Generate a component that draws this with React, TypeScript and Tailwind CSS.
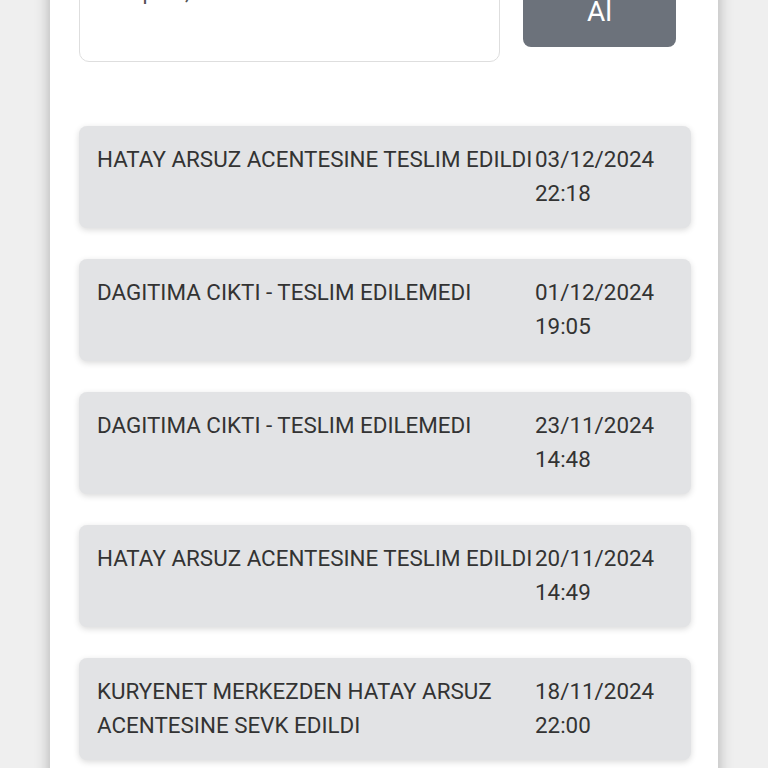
import React from "react";

const rows = [
  { text: "HATAY ARSUZ ACENTESINE TESLIM EDILDI", date: "03/12/2024", time: "22:18" },
  { text: "DAGITIMA CIKTI - TESLIM EDILEMEDI", date: "01/12/2024", time: "19:05" },
  { text: "DAGITIMA CIKTI - TESLIM EDILEMEDI", date: "23/11/2024", time: "14:48" },
  { text: "HATAY ARSUZ ACENTESINE TESLIM EDILDI", date: "20/11/2024", time: "14:49" },
  { text: "KURYENET MERKEZDEN HATAY ARSUZ ACENTESINE SEVK EDILDI", date: "18/11/2024", time: "22:00" },
];

export default function App() {
  return (
    <div className="h-[768px] overflow-hidden bg-[#efefef]" style={{ fontFamily: "Roboto, 'Noto Sans', sans-serif" }}>
      <div className="ml-[50px] w-[668px] min-h-[900px] bg-white shadow-[0_0_14px_rgba(0,0,0,0.28)] -mt-[40px] px-[29px]">
        <div className="flex items-start gap-[23px]">
          <div className="w-[421px] h-[102px] rounded-[10px] border border-[#dedede] bg-white px-[22px] pt-[17px] text-[22px] leading-[28px] text-[#555555]">
            <span>Takip no, 1234 5678</span>
          </div>
          <button className="mt-[17px] w-[153px] h-[70px] rounded-[8px] bg-[#6c727b] text-white text-[28px] leading-none">
            Al
          </button>
        </div>
        <div className="mt-[64px] flex flex-col gap-[31px] w-[612px]">
          {rows.map((r, i) => (
            <div
              key={i}
              className="flex rounded-[8px] bg-[#e2e3e5] px-[18px] pt-[16px] pb-[18px] text-[22.4px] leading-[34px] text-[#333333] shadow-[0_2px_6px_rgba(0,0,0,0.15)]"
            >
              <div className="w-[438px] shrink-0">{r.text}</div>
              <div className="w-[138px] shrink-0">
                {r.date} {r.time}
              </div>
            </div>
          ))}
        </div>
      </div>
    </div>
  );
}
